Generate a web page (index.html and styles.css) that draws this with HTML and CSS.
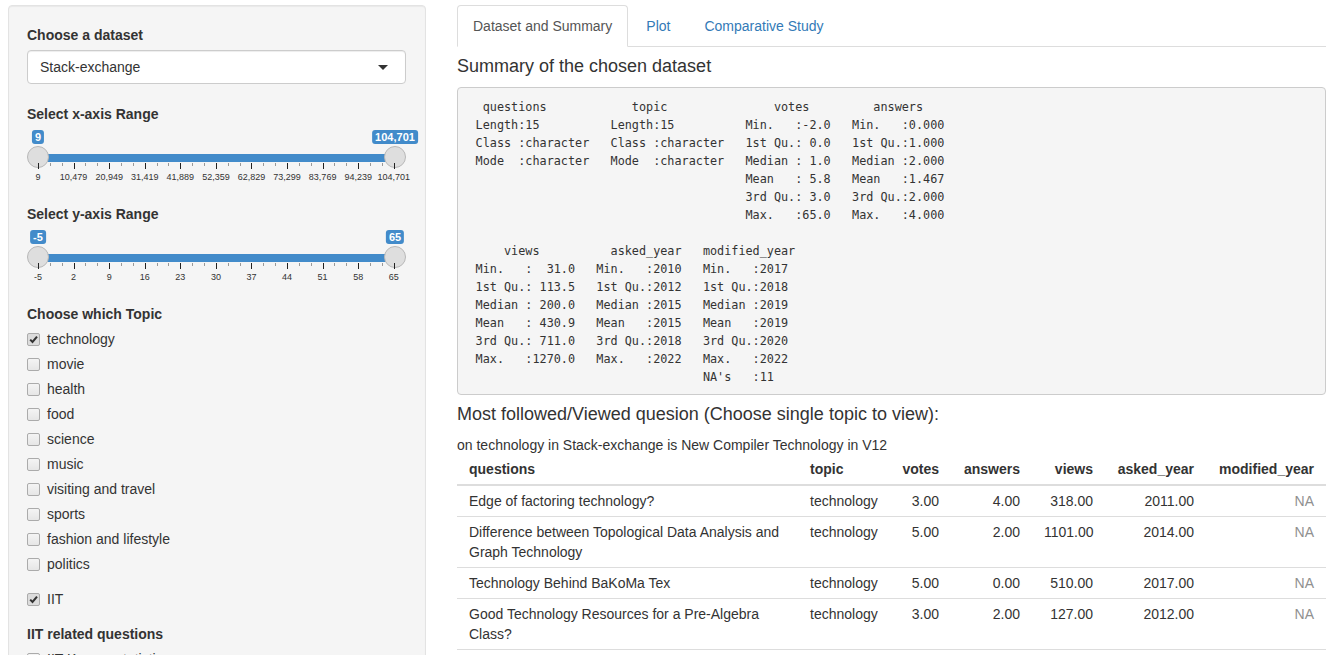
FILE: index.html
```html
<!DOCTYPE html>
<html lang="en">
<head>
<meta charset="utf-8">
<title>Stack-exchange explorer</title>
<link rel="stylesheet" href="styles.css">
</head>
<body>
<div class="page">
  <div class="sidebar">
    <form class="well">
      <div class="form-group select-group">
        <label class="control-label">Choose a dataset</label>
        <div class="select">Stack-exchange</div>
      </div>

      <div class="form-group">
        <label class="control-label">Select x-axis Range</label>
        <div class="irs">
          <div class="irs-track">
            <div class="irs-bar" style="left:0%;right:0%"></div>
            <span class="irs-handle" style="left:0%"></span>
            <span class="irs-handle" style="left:100%"></span>
            <span class="irs-label" style="left:0%">9</span>
            <span class="irs-label" style="left:100%">104,701</span>
            <div class="irs-grid">
              <span class="t major"><span class="gt">9</span></span><span class="t"></span><span class="t"></span>
              <span class="t major"><span class="gt">10,479</span></span><span class="t"></span><span class="t"></span>
              <span class="t major"><span class="gt">20,949</span></span><span class="t"></span><span class="t"></span>
              <span class="t major"><span class="gt">31,419</span></span><span class="t"></span><span class="t"></span>
              <span class="t major"><span class="gt">41,889</span></span><span class="t"></span><span class="t"></span>
              <span class="t major"><span class="gt">52,359</span></span><span class="t"></span><span class="t"></span>
              <span class="t major"><span class="gt">62,829</span></span><span class="t"></span><span class="t"></span>
              <span class="t major"><span class="gt">73,299</span></span><span class="t"></span><span class="t"></span>
              <span class="t major"><span class="gt">83,769</span></span><span class="t"></span><span class="t"></span>
              <span class="t major"><span class="gt">94,239</span></span><span class="t"></span><span class="t"></span>
              <span class="t major"><span class="gt">104,701</span></span>
            </div>
          </div>
        </div>
      </div>

      <div class="form-group">
        <label class="control-label">Select y-axis Range</label>
        <div class="irs">
          <div class="irs-track">
            <div class="irs-bar" style="left:0%;right:0%"></div>
            <span class="irs-handle" style="left:0%"></span>
            <span class="irs-handle" style="left:100%"></span>
            <span class="irs-label" style="left:0%">-5</span>
            <span class="irs-label" style="left:100%">65</span>
            <div class="irs-grid">
              <span class="t major"><span class="gt">-5</span></span><span class="t"></span><span class="t"></span>
              <span class="t major"><span class="gt">2</span></span><span class="t"></span><span class="t"></span>
              <span class="t major"><span class="gt">9</span></span><span class="t"></span><span class="t"></span>
              <span class="t major"><span class="gt">16</span></span><span class="t"></span><span class="t"></span>
              <span class="t major"><span class="gt">23</span></span><span class="t"></span><span class="t"></span>
              <span class="t major"><span class="gt">30</span></span><span class="t"></span><span class="t"></span>
              <span class="t major"><span class="gt">37</span></span><span class="t"></span><span class="t"></span>
              <span class="t major"><span class="gt">44</span></span><span class="t"></span><span class="t"></span>
              <span class="t major"><span class="gt">51</span></span><span class="t"></span><span class="t"></span>
              <span class="t major"><span class="gt">58</span></span><span class="t"></span><span class="t"></span>
              <span class="t major"><span class="gt">65</span></span>
            </div>
          </div>
        </div>
      </div>

      <div class="form-group">
        <label class="control-label">Choose which Topic</label>
        <div class="options">
          <label class="checkbox"><span class="cb checked"><svg width="9" height="9" viewBox="0 0 9 9"><path d="M1.2 4.6 L3.5 7 L8 1.6" fill="none" stroke="#333" stroke-width="2"/></svg></span><span>technology</span></label>
          <label class="checkbox"><span class="cb"></span><span>movie</span></label>
          <label class="checkbox"><span class="cb"></span><span>health</span></label>
          <label class="checkbox"><span class="cb"></span><span>food</span></label>
          <label class="checkbox"><span class="cb"></span><span>science</span></label>
          <label class="checkbox"><span class="cb"></span><span>music</span></label>
          <label class="checkbox"><span class="cb"></span><span>visiting and travel</span></label>
          <label class="checkbox"><span class="cb"></span><span>sports</span></label>
          <label class="checkbox"><span class="cb"></span><span>fashion and lifestyle</span></label>
          <label class="checkbox"><span class="cb"></span><span>politics</span></label>
        </div>
      </div>

      <div class="form-group">
        <label class="checkbox"><span class="cb checked"><svg width="9" height="9" viewBox="0 0 9 9"><path d="M1.2 4.6 L3.5 7 L8 1.6" fill="none" stroke="#333" stroke-width="2"/></svg></span><span>IIT</span></label>
      </div>

      <div class="form-group">
        <label class="control-label">IIT related questions</label>
        <div class="options">
          <label class="checkbox"><span class="cb"></span><span>IIT Kanpur statistics</span></label>
          <label class="checkbox"><span class="cb"></span><span>IIT Bombay</span></label>
        </div>
      </div>
    </form>
  </div>

  <div class="main">
    <ul class="nav-tabs">
      <li class="active"><a href="#">Dataset and Summary</a></li>
      <li><a href="#">Plot</a></li>
      <li><a href="#">Comparative Study</a></li>
    </ul>
    <div class="tab-content">
      <h4>Summary of the chosen dataset</h4>
<pre class="summary">  questions            topic               votes         answers     
 Length:15          Length:15          Min.   :-2.0   Min.   :0.000  
 Class :character   Class :character   1st Qu.: 0.0   1st Qu.:1.000  
 Mode  :character   Mode  :character   Median : 1.0   Median :2.000  
                                       Mean   : 5.8   Mean   :1.467  
                                       3rd Qu.: 3.0   3rd Qu.:2.000  
                                       Max.   :65.0   Max.   :4.000  
                                                                     
     views          asked_year   modified_year 
 Min.   :  31.0   Min.   :2010   Min.   :2017  
 1st Qu.: 113.5   1st Qu.:2012   1st Qu.:2018  
 Median : 200.0   Median :2015   Median :2019  
 Mean   : 430.9   Mean   :2015   Mean   :2019  
 3rd Qu.: 711.0   3rd Qu.:2018   3rd Qu.:2020  
 Max.   :1270.0   Max.   :2022   Max.   :2022  
                                 NA's   :11    </pre>
      <h4>Most followed/Viewed quesion (Choose single topic to view):</h4>
      <div class="result-text">on technology in Stack-exchange is New Compiler Technology in V12</div>
      <table class="tbl">
        <colgroup>
          <col class="c-q"><col class="c-topic"><col class="c-votes"><col class="c-ans"><col class="c-views"><col class="c-asked"><col class="c-mod">
        </colgroup>
        <thead>
          <tr><th>questions</th><th>topic</th><th class="num">votes</th><th class="num">answers</th><th class="num">views</th><th class="num">asked_year</th><th class="num">modified_year</th></tr>
        </thead>
        <tbody>
          <tr><td>Edge of factoring technology?</td><td>technology</td><td class="num">3.00</td><td class="num">4.00</td><td class="num">318.00</td><td class="num">2011.00</td><td class="num na">NA</td></tr>
          <tr><td>Difference between Topological Data Analysis and Graph Technology</td><td>technology</td><td class="num">5.00</td><td class="num">2.00</td><td class="num">1101.00</td><td class="num">2014.00</td><td class="num na">NA</td></tr>
          <tr><td>Technology Behind BaKoMa Tex</td><td>technology</td><td class="num">5.00</td><td class="num">0.00</td><td class="num">510.00</td><td class="num">2017.00</td><td class="num na">NA</td></tr>
          <tr><td>Good Technology Resources for a Pre-Algebra Class?</td><td>technology</td><td class="num">3.00</td><td class="num">2.00</td><td class="num">127.00</td><td class="num">2012.00</td><td class="num na">NA</td></tr>
          <tr><td>New Compiler Technology in V12</td><td>technology</td><td class="num">12.00</td><td class="num">1.00</td><td class="num">1270.00</td><td class="num">2019.00</td><td class="num">2020.00</td></tr>
        </tbody>
      </table>
    </div>
  </div>
</div>
</body>
</html>
```
FILE: styles.css
```css
* { box-sizing: border-box; }
html, body { margin: 0; padding: 0; overflow: hidden; }
body {
  font-family: "Liberation Sans", Arial, sans-serif;
  font-size: 14px;
  line-height: 20px;
  color: #333;
  background: #fff;
}

.page {
  display: flex;
  align-items: flex-start;
  gap: 31px;
  padding: 5px 15px 0 8px;
}

.sidebar { width: 418px; flex: none; }
.main { width: 869px; flex: none; }

/* Well */
.well {
  display: block;
  margin: 0;
  background: #f5f5f5;
  border: 1px solid #e3e3e3;
  border-radius: 4px;
  box-shadow: inset 0 1px 1px rgba(0, 0, 0, .05);
  padding: 19px 19px 19px 18px;
  min-height: 720px;
}

.form-group { margin-bottom: 15px; }
.form-group.select-group { margin-bottom: 20px; }

.control-label {
  display: block;
  font-weight: bold;
  margin-bottom: 5px;
}

/* Select */
.select {
  position: relative;
  height: 34px;
  border: 1px solid #ccc;
  border-radius: 4px;
  background: #fff;
  padding: 6px 12px;
  box-shadow: inset 0 1px 1px rgba(0, 0, 0, .075);
  color: #333;
}
.select::after {
  content: "";
  position: absolute;
  right: 17px;
  top: 50%;
  margin-top: -2px;
  border-style: solid;
  border-width: 5px 5px 0 5px;
  border-color: #333 transparent transparent transparent;
}

/* Range slider */
.irs {
  height: 60px;
  padding: 0 11px;
}
.irs-track {
  position: relative;
  height: 100%;
}
.irs-bar {
  position: absolute;
  top: 25px;
  height: 8px;
  background: #428bca;
}
.irs-handle {
  position: absolute;
  top: 17px;
  width: 22px;
  height: 22px;
  margin-left: -11px;
  border-radius: 50%;
  background: #dedede;
  border: 1px solid #b8b8b8;
}
.irs-label {
  position: absolute;
  top: 1px;
  transform: translateX(-50%);
  height: 14px;
  padding: 0 3px;
  line-height: 14px;
  font-size: 11px;
  font-weight: bold;
  color: #fff;
  background: #428bca;
  border-radius: 3px;
  white-space: nowrap;
}
.irs-grid {
  position: absolute;
  top: 34px;
  left: 0;
  right: 0;
  display: flex;
  justify-content: space-between;
  align-items: flex-start;
}
.t {
  position: relative;
  width: 1px;
  height: 3px;
  background: #999;
}
.t.major {
  height: 6px;
  background: #222;
}
.gt {
  position: absolute;
  top: 9px;
  left: 0;
  transform: translateX(-50%);
  font-size: 9px;
  line-height: 11px;
  color: #333;
  white-space: nowrap;
}

/* Checkboxes */
.options { display: flex; flex-direction: column; gap: 5px; }
.checkbox {
  display: flex;
  align-items: flex-start;
  gap: 7px;
  height: 20px;
  font-weight: normal;
}
.cb {
  flex: none;
  width: 13px;
  height: 13px;
  margin-top: 4px;
  border: 1px solid #ababab;
  border-radius: 2px;
  background: linear-gradient(#f4f4f4, #e6e6e6);
  display: flex;
  align-items: center;
  justify-content: center;
}
.cb.checked { background: #dcdcdc; }
.cb svg { display: block; }

/* Tabs */
.nav-tabs {
  display: flex;
  list-style: none;
  margin: 0;
  padding: 0;
  border-bottom: 1px solid #ddd;
}
.nav-tabs li { margin: 0 2px -1px 0; }
.nav-tabs a {
  display: block;
  padding: 10px 15px;
  line-height: 20px;
  border: 1px solid transparent;
  border-radius: 4px 4px 0 0;
  color: #337ab7;
  text-decoration: none;
}
.nav-tabs li.active a {
  color: #555;
  background: #fff;
  border-color: #ddd #ddd transparent;
}

h4 {
  font-size: 18px;
  font-weight: normal;
  line-height: 1.1;
  margin: 10px 0;
  color: #333;
}

.summary {
  margin: 0 0 10px;
  padding: 10px 9.5px 8px 10.5px;
  border: 1px solid #ccc;
  border-radius: 4px;
  background: #f5f5f5;
  font-family: "DejaVu Sans Mono", "Liberation Mono", monospace;
  font-size: 11.8px;
  line-height: 18px;
  color: #333;
  white-space: pre;
  overflow: hidden;
}

.result-text { margin-bottom: -1px; }

/* Table */
.tbl {
  width: 100%;
  border-collapse: collapse;
  table-layout: fixed;
}
.c-q { width: 341px; }
.c-topic { width: 88px; }
.c-votes { width: 65px; }
.c-ans { width: 81px; }
.c-views { width: 73px; }
.c-asked { width: 101px; }
.c-mod { width: 120px; }
.tbl th, .tbl td {
  padding: 5px 12px;
  line-height: 20px;
  vertical-align: top;
  text-align: left;
}
.tbl thead th {
  border-bottom: 2px solid #ddd;
  font-weight: bold;
}
.tbl tbody td { border-top: 1px solid #ddd; }
.tbl .num { text-align: right; }
.tbl .na { color: #909090; }
```
